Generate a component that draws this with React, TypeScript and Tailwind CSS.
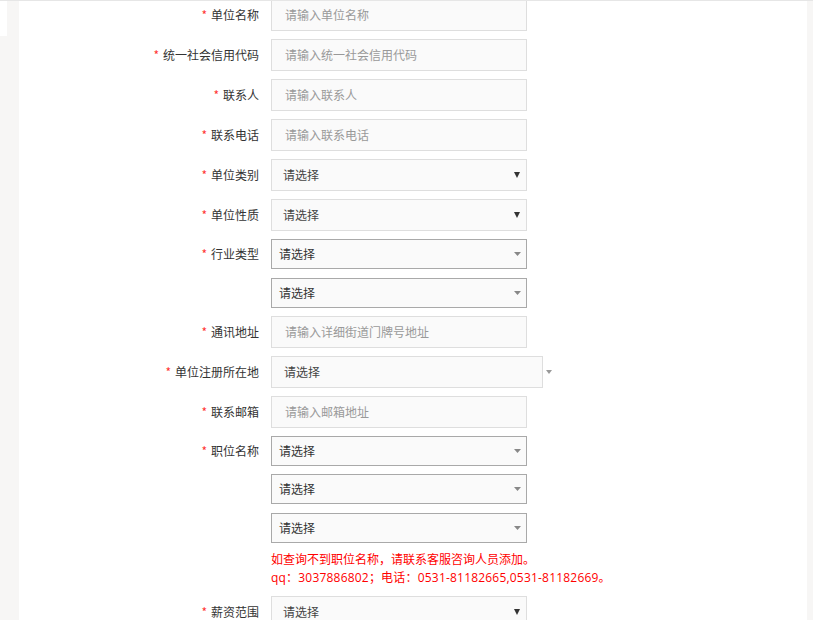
import React from "react";

const font = { fontFamily: '"Noto Sans CJK SC", "Noto Sans", sans-serif' };
const redFont = { fontFamily: '"Open Sans", "Noto Sans CJK SC", sans-serif' };

function Label({ text }: { text: string }) {
  return (
    <div className="w-[252px] shrink-0 text-right pr-[12px] text-[12px] text-[#333] leading-[30px]">
      <span className="text-[#f33] mr-[4px]">*</span>
      {text}
    </div>
  );
}

function TextBox({ ph }: { ph: string }) {
  return (
    <div className="w-[256px] h-[32px] border border-[#dedede] bg-[#fafafa] pl-[13px] flex items-center text-[12px] text-[#999]">
      {ph}
    </div>
  );
}

function LightSelect() {
  return (
    <div className="w-[256px] h-[32px] border border-[#dedede] bg-[#fafafa] pl-[11px] pr-[6px] flex items-center justify-between text-[12px] text-[#444]">
      <span>请选择</span>
      <svg width="6" height="6" viewBox="0 0 6 6">
        <polygon points="0,0 6,0 3,6" fill="#333" />
      </svg>
    </div>
  );
}

function DarkSelect() {
  return (
    <div className="w-[256px] h-[30px] border border-[#a9a9a9] bg-[#fafafa] pl-[7px] pr-[5px] flex items-center justify-between text-[12px] text-[#333]">
      <span>请选择</span>
      <svg width="7" height="4" viewBox="0 0 7 4">
        <polygon points="0,0 7,0 3.5,4" fill="#888" />
      </svg>
    </div>
  );
}

function Row({ label, children, mb = "mb-2" }: { label?: string; children: React.ReactNode; mb?: string }) {
  return (
    <div className={`flex items-start ${mb}`}>
      {label ? <Label text={label} /> : <div className="w-[252px] shrink-0" />}
      <div className="flex flex-col">{children}</div>
    </div>
  );
}

function RowC({ label, children, mb = "mb-2" }: { label: string; children: React.ReactNode; mb?: string }) {
  return (
    <div className={`flex items-center ${mb}`}>
      <Label text={label} />
      {children}
    </div>
  );
}

export default function App() {
  return (
    <div style={font} className="w-[813px] h-[620px] overflow-hidden bg-[#f7f6f5] flex border-t border-[#e6e6e6]">
      <div className="w-[19px] shrink-0">
        <div className="w-[7px] h-[35px] bg-white" />
      </div>
      <div className="w-[788px] shrink-0 bg-white h-full">
        <div className="-mt-[2px]">
          <RowC label="单位名称"><TextBox ph="请输入单位名称" /></RowC>
          <RowC label="统一社会信用代码"><TextBox ph="请输入统一社会信用代码" /></RowC>
          <RowC label="联系人"><TextBox ph="请输入联系人" /></RowC>
          <RowC label="联系电话"><TextBox ph="请输入联系电话" /></RowC>
          <RowC label="单位类别"><LightSelect /></RowC>
          <RowC label="单位性质"><LightSelect /></RowC>
          <Row label="行业类型">
            <DarkSelect />
            <div className="h-[9px]" />
            <DarkSelect />
          </Row>
          <RowC label="通讯地址"><TextBox ph="请输入详细街道门牌号地址" /></RowC>
          <RowC label="单位注册所在地">
            <div className="flex items-center">
              <div className="w-[272px] h-[32px] border border-[#dedede] bg-[#fafafa] pl-[12px] flex items-center text-[12px] text-[#444]">
                请选择
              </div>
              <svg className="ml-[3px]" width="6" height="4" viewBox="0 0 6 4">
                <polygon points="0,0 6,0 3,4" fill="#999" />
              </svg>
            </div>
          </RowC>
          <RowC label="联系邮箱"><TextBox ph="请输入邮箱地址" /></RowC>
          <Row label="职位名称" mb="mb-0">
            <DarkSelect />
            <div className="h-[8px]" />
            <DarkSelect />
            <div className="h-[9px]" />
            <DarkSelect />
            <div style={redFont} className="mt-[8px] mb-[9px] text-[12px] leading-[18px] text-[#f00] whitespace-nowrap">
              <div>如查询不到职位名称，请联系客服咨询人员添加。</div>
              <div className="tracking-[0.2px]">qq：3037886802；电话：0531-81182665,0531-81182669。</div>
            </div>
          </Row>
          <RowC label="薪资范围"><LightSelect /></RowC>
        </div>
      </div>
      <div className="flex-1" />
    </div>
  );
}
